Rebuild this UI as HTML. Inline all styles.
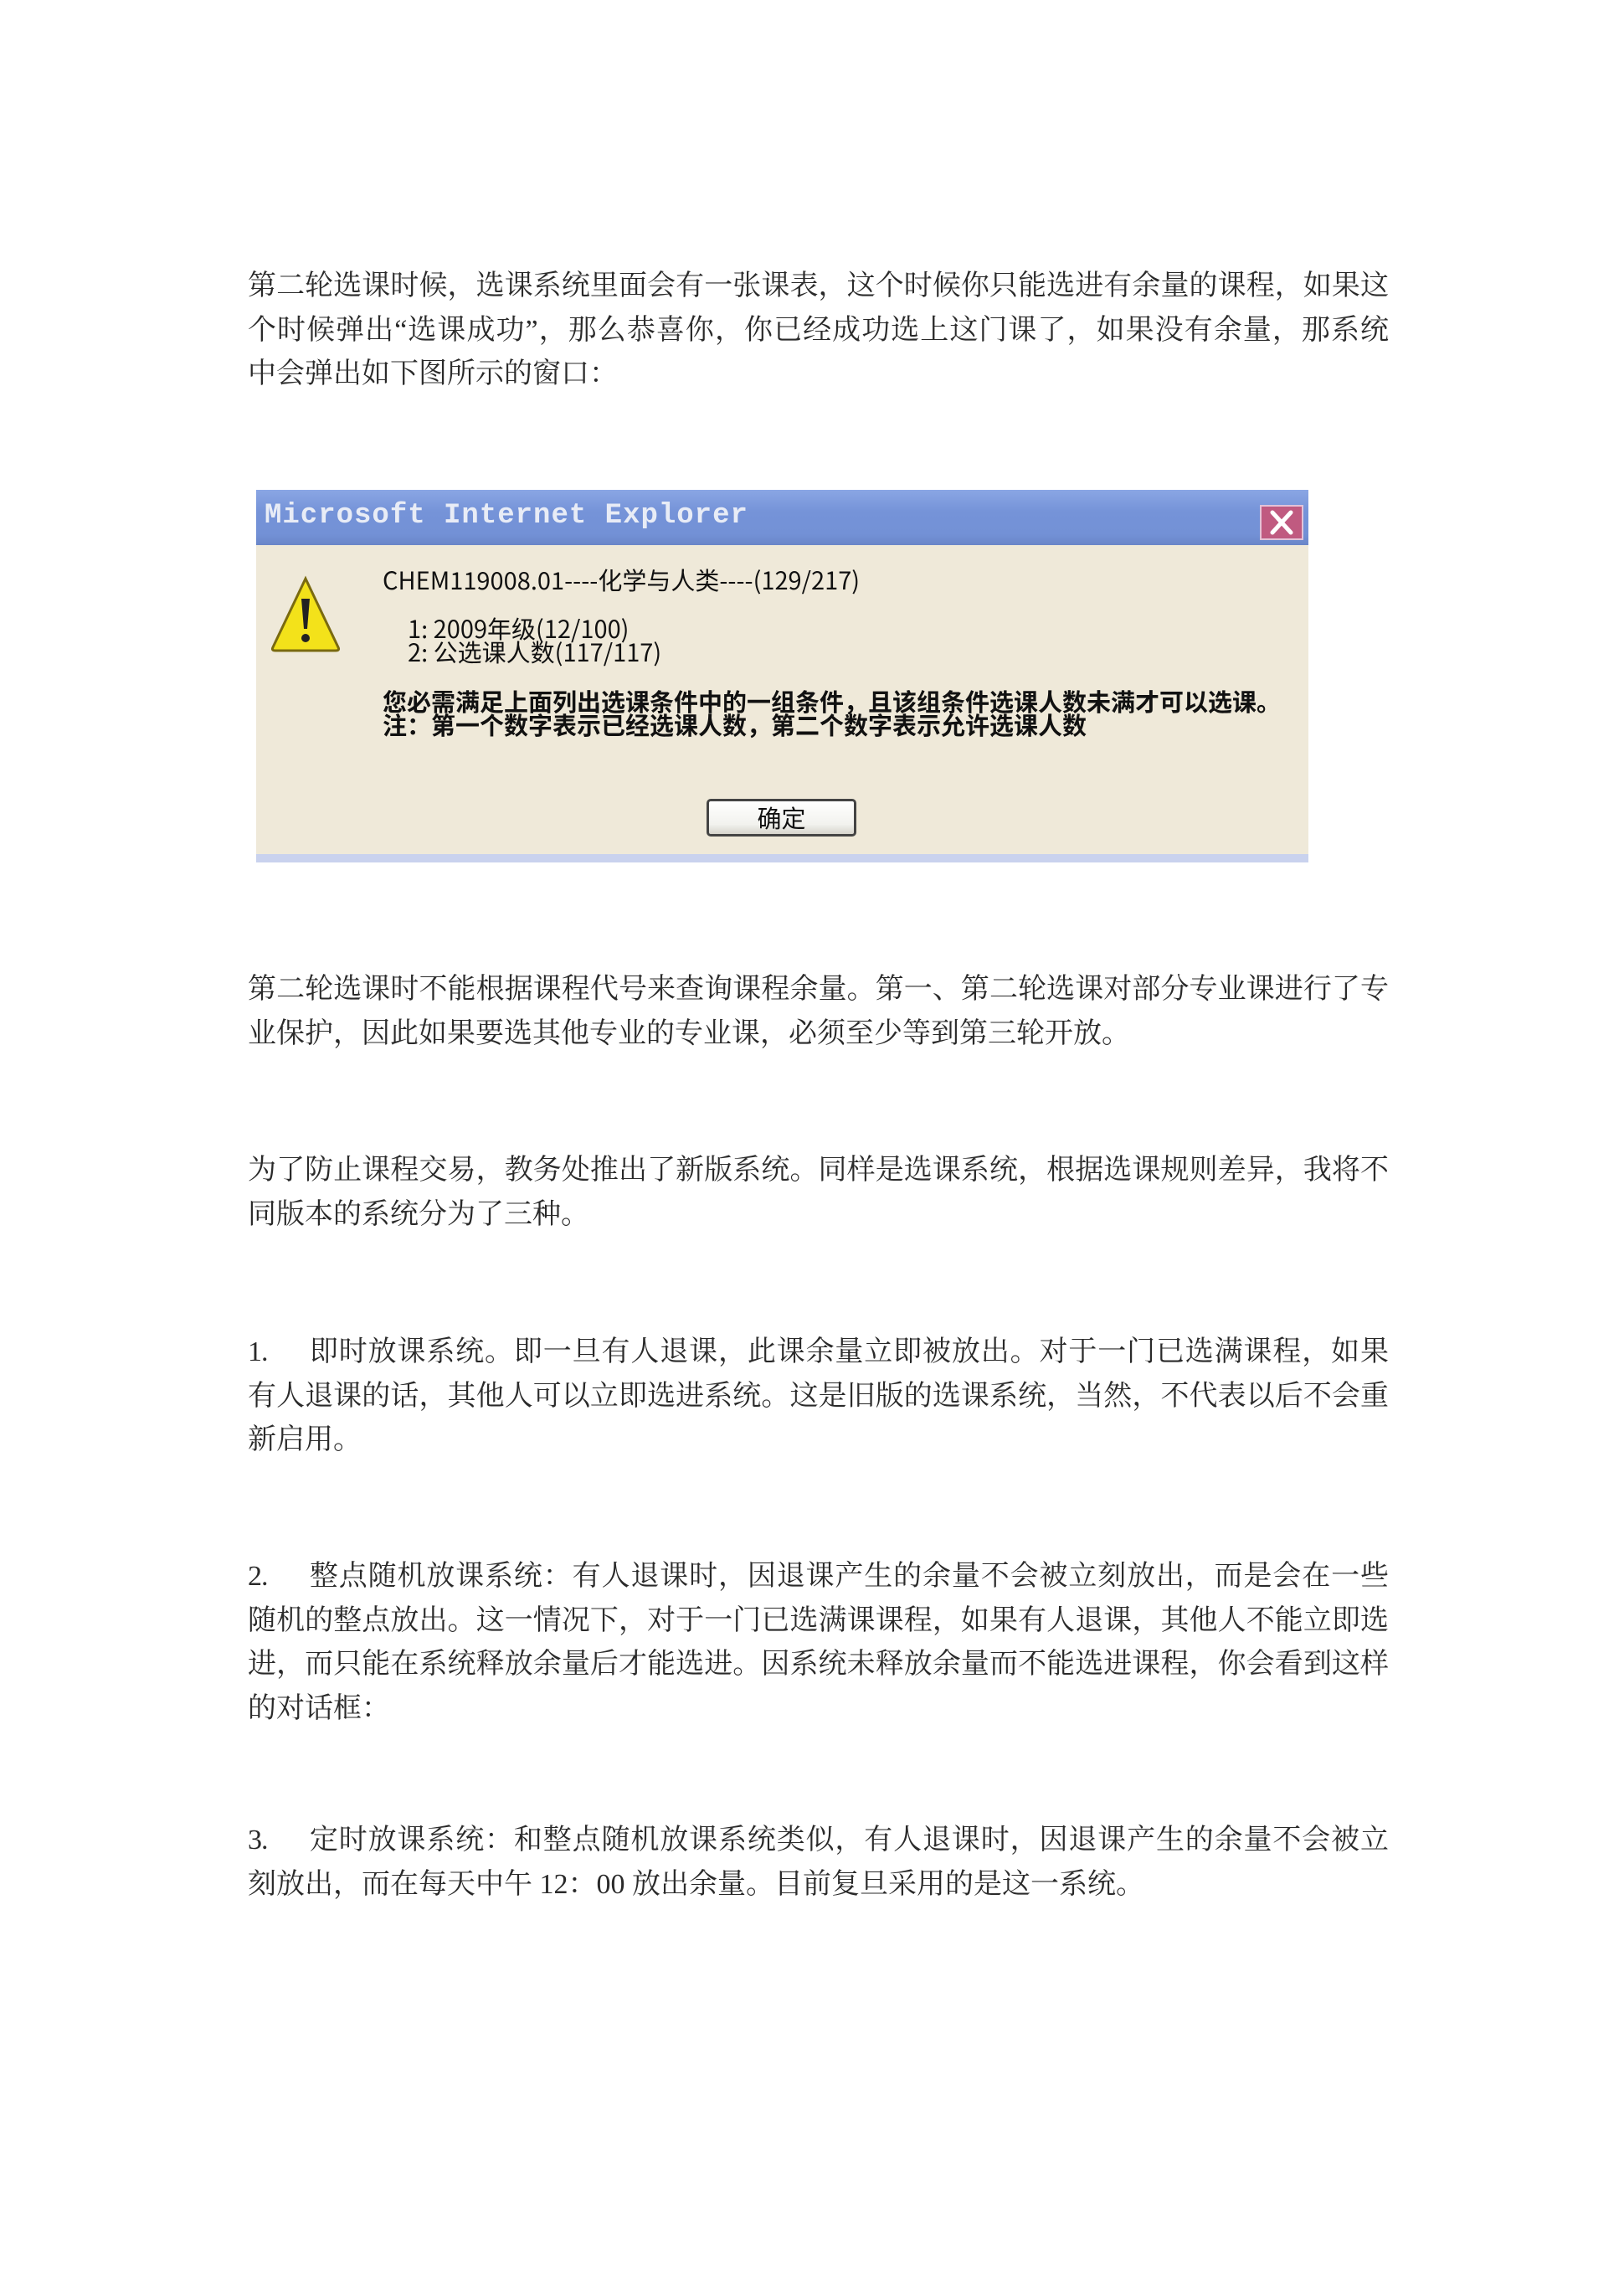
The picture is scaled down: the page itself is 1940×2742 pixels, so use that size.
<!DOCTYPE html>
<html><head><meta charset="utf-8">
<style>
html,body{margin:0;padding:0;background:#fff;}
body{width:1940px;height:2742px;position:relative;overflow:hidden;}
.p{position:absolute;left:296px;width:1362px;font-family:"Liberation Serif","Noto Serif CJK SC",serif;font-size:34px;line-height:52.5px;color:#2a2a2a;}
.p div{height:52.5px;white-space:nowrap;overflow:visible;}
.p .j{text-align:justify;text-align-last:justify;white-space:normal;letter-spacing:-1px;}
.n{display:inline-block;width:72px;}
.dlg{position:absolute;left:306px;top:585px;width:1257px;height:445px;background:#efe9d9;}
.title{position:absolute;left:0;top:0;width:100%;height:66px;background:linear-gradient(#8aa6e4,#7593d8 40%,#7391d6 80%,#6a86c8);}
.title span{position:absolute;left:10px;top:12px;font-family:"Liberation Mono",monospace;font-weight:bold;font-size:34px;color:#e8ecf6;letter-spacing:1px;}
.close{position:absolute;right:6px;top:18px;width:52px;height:42px;background:#c05a80;border:2px solid #e2c3d8;box-sizing:border-box;}
.dt{position:absolute;font-family:"WenQuanYi Zen Hei","Noto Sans CJK SC",sans-serif;font-size:29px;color:#111;white-space:nowrap;line-height:28px;}
.btn{position:absolute;left:538px;top:369px;width:179px;height:45px;box-sizing:border-box;border:3px solid #444;border-radius:5px;background:linear-gradient(#fff,#f2f2ee 70%,#d6d4cc);text-align:center;font-family:"WenQuanYi Zen Hei","Noto Sans CJK SC",sans-serif;font-size:29px;line-height:38px;color:#111;}
.bot{position:absolute;left:0;bottom:0;width:100%;height:10px;background:#c9d2ee;}
</style></head><body>

<div class="p" style="top:316px;">
<div class="j">第二轮选课时候，选课系统里面会有一张课表，这个时候你只能选进有余量的课程，如果这</div>
<div class="j">个时候弹出“选课成功”，那么恭喜你，你已经成功选上这门课了，如果没有余量，那系统</div>
<div>中会弹出如下图所示的窗口：</div>
</div>

<div class="dlg">
  <div class="title"><span>Microsoft Internet Explorer</span>
    <div class="close"><svg width="48" height="38" viewBox="0 0 48 38"><path d="M13 7 L35 31 M35 7 L13 31" stroke="#fff" stroke-width="5" stroke-linecap="round"/></svg></div>
  </div>
  <svg style="position:absolute;left:16px;top:100px" width="86" height="96" viewBox="0 0 86 96">
    <path d="M43 6 L82 88 Q84 92 79 92 L7 92 Q2 92 4 88 Z" fill="#f3e21a" stroke="#7a6a10" stroke-width="3"/>
    <path d="M38 30 L48 30 L45 66 L41 66 Z" fill="#222"/>
    <circle cx="43" cy="77" r="5" fill="#222"/>
  </svg>
  <div class="dt" style="left:151px;top:93px;">CHEM119008.01----化学与人类----(129/217)</div>
  <div class="dt" style="left:181px;top:151px;">1:&nbsp;2009年级(12/100)</div>
  <div class="dt" style="left:181px;top:179px;">2:&nbsp;公选课人数(117/117)</div>
  <div class="dt" style="left:151px;top:238px;font-weight:bold;">您必需满足上面列出选课条件中的一组条件，且该组条件选课人数未满才可以选课。</div>
  <div class="dt" style="left:151px;top:266px;font-weight:bold;">注：第一个数字表示已经选课人数，第二个数字表示允许选课人数</div>
  <div class="btn">确定</div>
  <div class="bot"></div>
</div>

<div class="p" style="top:1156px;">
<div class="j">第二轮选课时不能根据课程代号来查询课程余量。第一、第二轮选课对部分专业课进行了专</div>
<div>业保护，因此如果要选其他专业的专业课，必须至少等到第三轮开放。</div>
</div>

<div class="p" style="top:1372px;">
<div class="j">为了防止课程交易，教务处推出了新版系统。同样是选课系统，根据选课规则差异，我将不</div>
<div>同版本的系统分为了三种。</div>
</div>

<div class="p" style="top:1589px;">
<div class="j"><span class="n">1.</span>即时放课系统。即一旦有人退课，此课余量立即被放出。对于一门已选满课程，如果</div>
<div class="j">有人退课的话，其他人可以立即选进系统。这是旧版的选课系统，当然，不代表以后不会重</div>
<div>新启用。</div>
</div>

<div class="p" style="top:1857px;">
<div class="j"><span class="n">2.</span>整点随机放课系统：有人退课时，因退课产生的余量不会被立刻放出，而是会在一些</div>
<div class="j">随机的整点放出。这一情况下，对于一门已选满课课程，如果有人退课，其他人不能立即选</div>
<div class="j">进，而只能在系统释放余量后才能选进。因系统未释放余量而不能选进课程，你会看到这样</div>
<div>的对话框：</div>
</div>

<div class="p" style="top:2172px;">
<div class="j"><span class="n">3.</span>定时放课系统：和整点随机放课系统类似，有人退课时，因退课产生的余量不会被立</div>
<div>刻放出，而在每天中午 12：00 放出余量。目前复旦采用的是这一系统。</div>
</div>

</body></html>
